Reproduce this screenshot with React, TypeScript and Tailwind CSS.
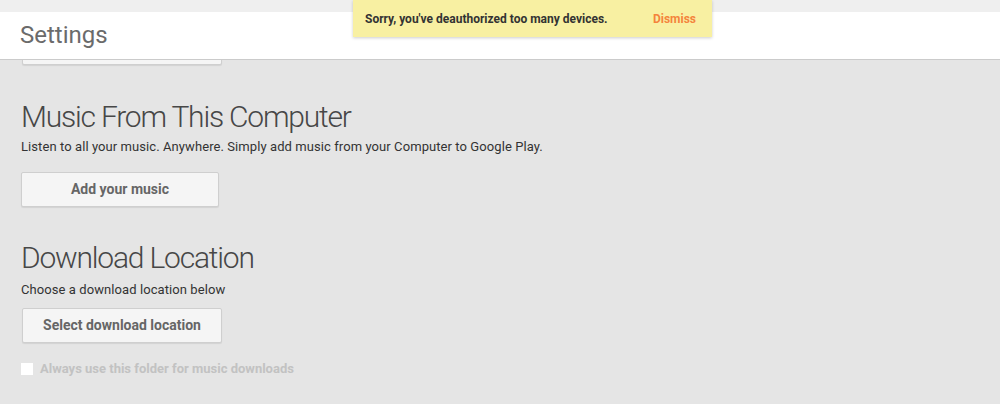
import React from "react";

const font = { fontFamily: "Roboto, 'Noto Sans', sans-serif" };

const GreyButton = ({ label, className }: { label: string; className: string }) => (
  <button
    className={`h-[35px] rounded-[2px] border border-[#cfcfcf] bg-[#f5f5f5] text-[14px] font-bold text-[#666] shadow-[0_1px_1px_rgba(0,0,0,0.08)] ${className}`}
  >
    {label}
  </button>
);

export default function App() {
  return (
    <div className="relative h-[404px] w-full overflow-hidden bg-[#e5e5e5]" style={font}>
      <div className="h-[12px] bg-[#efefef]"></div>
      <div className="flex h-[48px] items-center border-b border-[#cbcbcb] bg-white pl-[20px]">
        <span className="text-[24px] leading-[28px] text-[#6b6b6b] -mt-[1px]">Settings</span>
      </div>

      <div className="h-[344px] overflow-hidden pl-[21px]">
        {/* bottom edge of the previous section's button, scrolled under the header */}
        <GreyButton label="" className="-mt-[30px] ml-[1px] block w-[200px]" />

        <h2 className="mt-[34px] text-[30px] font-light leading-[36px] tracking-[-1.2px] text-[#474747]">
          Music From This Computer
        </h2>
        <p className="mt-[4px] text-[13px] leading-[16px] tracking-[0.08px] text-[#333]">
          Listen to all your music. Anywhere. Simply add music from your Computer to Google Play.
        </p>
        <GreyButton label="Add your music" className="mt-[17px] block w-[198px]" />

        <h2 className="mt-[33px] text-[30px] font-light leading-[36px] tracking-[-1.2px] text-[#474747]">
          Download Location
        </h2>
        <p className="mt-[6px] text-[13px] leading-[16px] tracking-[0.08px] text-[#333]">
          Choose a download location below
        </p>
        <GreyButton label="Select download location" className="mt-[10px] ml-[1px] block w-[200px]" />

        <label className="mt-[18px] flex items-center gap-[7px]">
          <span className="block h-[12px] w-[12px] bg-white"></span>
          <span className="text-[13px] font-bold leading-[16px] text-[#c2c2c2]">
            Always use this folder for music downloads
          </span>
        </label>
      </div>

      <div className="absolute left-[353px] top-0 flex h-[37px] w-[359px] items-center justify-between bg-[#f8f0a2] pl-[12px] pr-[16px] shadow-[0_1px_3px_rgba(0,0,0,0.2)]">
        <span className="text-[12px] font-bold text-[#333]">
          Sorry, you've deauthorized too many devices.
        </span>
        <span className="text-[12px] font-bold text-[#f4843c]">Dismiss</span>
      </div>
    </div>
  );
}
